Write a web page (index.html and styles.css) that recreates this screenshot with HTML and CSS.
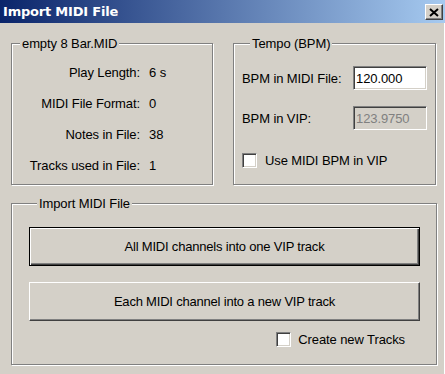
FILE: index.html
```html
<!DOCTYPE html>
<html lang="en">
<head>
    <meta charset="UTF-8">
    <meta name="viewport" content="width=device-width, initial-scale=1.0">
    <title>Import MIDI File</title>
    <link rel="stylesheet" href="styles.css">
</head>
<body>
    <div class="window">
        <!-- Title bar -->
        <div class="title-bar">
            <span class="title">Import MIDI File</span>
            <button class="close-btn" aria-label="Close">
                <svg width="10" height="9" viewBox="0 0 10 9">
                    <path d="M1 1 L9 8 M9 1 L1 8" stroke="#000" stroke-width="2" fill="none"/>
                </svg>
            </button>
        </div>

        <div class="dialog-body">
            <div class="top-row">
                <!-- File info group -->
                <fieldset class="group file-info">
                    <legend>empty 8 Bar.MID</legend>
                    <div class="info-grid">
                        <span class="label">Play Length:</span><span>6 s</span>
                        <span class="label">MIDI File Format:</span><span>0</span>
                        <span class="label">Notes in File:</span><span>38</span>
                        <span class="label">Tracks used in File:</span><span>1</span>
                    </div>
                </fieldset>

                <!-- Tempo group -->
                <fieldset class="group tempo">
                    <legend>Tempo (BPM)</legend>
                    <div class="tempo-grid">
                        <span>BPM in MIDI File:</span>
                        <input class="text-field" type="text" value="120.000">
                        <span class="muted-label">BPM in VIP:</span>
                        <input class="text-field disabled" type="text" value="123.9750" disabled>
                    </div>
                    <label class="check-row">
                        <span class="checkbox"></span>
                        Use MIDI BPM in VIP
                    </label>
                </fieldset>
            </div>

            <!-- Import buttons -->
            <fieldset class="group import">
                <legend>Import MIDI File</legend>
                <button class="push-btn default">All MIDI channels into one VIP track</button>
                <button class="push-btn">Each MIDI channel into a new VIP track</button>
                <label class="check-row new-tracks">
                    <span class="checkbox"></span>
                    Create new Tracks
                </label>
            </fieldset>
        </div>
    </div>
</body>
</html>
```

FILE: styles.css
```css
body {
    margin: 0;
    padding: 0;
    background-color: #d4d0c8;
    font-family: "Liberation Sans", Arial, sans-serif;
    font-size: 13px;
    letter-spacing: -0.1px;
    color: #000;
}

.window {
    width: 445px;
    height: 374px;
    background-color: #d4d0c8;
    box-sizing: border-box;
    box-shadow: inset -1px 0 0 #ffffff;
}

/* Title bar with classic gradient */
.title-bar {
    height: 23px;
    display: flex;
    justify-content: space-between;
    align-items: center;
    padding: 0 2px 0 3px;
    background: linear-gradient(to right, #0a246a, #a6caf0);
    box-sizing: border-box;
}

.title {
    color: #fff;
    font-family: "DejaVu Sans", Verdana, sans-serif;
    font-weight: bold;
    font-size: 13px;
    letter-spacing: -0.2px;
}

.close-btn {
    width: 18px;
    height: 16px;
    padding: 0;
    display: flex;
    align-items: center;
    justify-content: center;
    background-color: #d4d0c8;
    border: 1px solid;
    border-color: #fff #404040 #404040 #fff;
    box-shadow: inset -1px -1px 0 #808080;
    margin-top: 1px;
}

.dialog-body {
    padding: 13px 8px 0 11px;
}

.top-row {
    display: flex;
    gap: 20px;
}

/* Etched group box */
.group {
    margin: 0;
    padding: 0;
    min-width: 0;
    box-sizing: border-box;
    border: 1px solid #808080;
    box-shadow: inset 1px 1px 0 #fff, 1px 1px 0 #fff;
}

.group legend {
    padding: 0 2px;
    margin-left: 8px;
    line-height: 15px;
    background-color: #d4d0c8;
}

.file-info {
    width: 202px;
    height: 149px;
}

.tempo {
    width: 203px;
    height: 149px;
    padding: 15px 8px 0 8px;
}

.info-grid {
    display: grid;
    grid-template-columns: 128px auto;
    grid-auto-rows: 31px;
    column-gap: 9px;
    align-items: center;
    padding-top: 6px;
}

.info-grid .label {
    text-align: right;
}

.tempo-grid {
    display: grid;
    grid-template-columns: 1fr 74px;
    grid-auto-rows: 24px;
    row-gap: 16px;
    align-items: center;
}

/* Sunken edit box */
.text-field {
    width: 74px;
    height: 24px;
    box-sizing: border-box;
    margin: 0;
    padding: 1px 2px 0;
    font-family: "Liberation Sans", Arial, sans-serif;
    font-size: 13px;
    letter-spacing: -0.1px;
    color: #000;
    background-color: #fff;
    border: 1px solid;
    border-color: #808080 #fff #fff #808080;
    box-shadow: inset 1px 1px 0 #404040, inset -1px -1px 0 #d4d0c8;
    outline: none;
}

.text-field.disabled {
    background-color: #d4d0c8;
    color: #808080;
}

.check-row {
    display: flex;
    align-items: center;
    gap: 8px;
    margin-top: 23px;
}

.checkbox {
    width: 15px;
    height: 15px;
    box-sizing: border-box;
    background-color: #fff;
    border: 1px solid;
    border-color: #808080 #fff #fff #808080;
    box-shadow: inset 1px 1px 0 #404040, inset -1px -1px 0 #d4d0c8;
}

.import {
    margin-top: 11px;
    width: 426px;
    height: 169px;
    padding: 16px 16px 0 17px;
    display: flex;
    flex-direction: column;
    gap: 16px;
}

/* Raised push buttons */
.push-btn {
    width: 391px;
    height: 39px;
    margin: 0;
    font-family: "Liberation Sans", Arial, sans-serif;
    font-size: 13px;
    letter-spacing: -0.2px;
    color: #000;
    background-color: #d4d0c8;
    border: 1px solid;
    border-color: #fff #404040 #404040 #fff;
    box-shadow: inset -1px -1px 0 #808080;
}

.push-btn.default {
    border-color: #000;
    box-shadow: inset 1px 1px 0 #fff, inset -1px -1px 0 #404040, inset -2px -2px 0 #808080;
}

.check-row.new-tracks {
    margin-top: -5px;
    align-self: flex-end;
    margin-right: 15px;
    gap: 7px;
}
```
